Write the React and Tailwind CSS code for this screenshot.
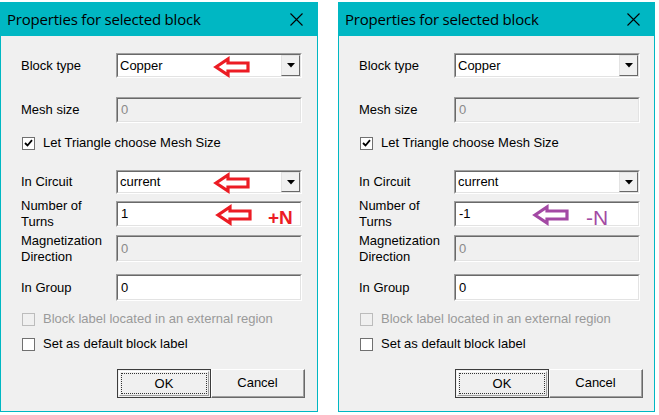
import React from "react";

const font = { fontFamily: '"Liberation Sans", Arial, sans-serif' };

function Sunken({ children, className = "", disabled }) {
  return (
    <div className={`border-t border-l border-t-[#a0a0a0] border-l-[#a0a0a0] border-b border-r border-b-white border-r-white ${className}`}>
      <div className={`h-full w-full border-t border-l border-t-[#696969] border-l-[#696969] border-b border-r border-b-[#e3e3e3] border-r-[#e3e3e3] ${disabled ? "bg-[#f0f0f0]" : "bg-white"} relative`}>
        {children}
      </div>
    </div>
  );
}

function Arrow({ color, className }) {
  return (
    <svg width="38" height="22" viewBox="0 0 38 22" className={className}>
      <polygon
        points="3,11 15,3 15,7 35,7 35,15 15,15 15,19"
        fill="none"
        stroke={color}
        strokeWidth="3.2"
        strokeLinejoin="miter"
      />
    </svg>
  );
}

function Combo({ value, extra }) {
  return (
    <Sunken className="w-[186px] h-full">
      <div className="h-full flex items-center pl-[2px] text-[13px] text-black">{value}</div>
      {extra}
      <div className="absolute right-0 top-0 bottom-0 w-[19px] bg-[#f0f0f0] border-t border-l border-t-[#e3e3e3] border-l-[#e3e3e3] border-b border-r border-b-[#696969] border-r-[#696969] flex items-center justify-center">
        <svg width="8" height="5" viewBox="0 0 8 5"><polygon points="0,0 8,0 4,4.5" fill="#000" /></svg>
      </div>
    </Sunken>
  );
}

function Field({ value, disabled, extra }) {
  return (
    <Sunken className="w-[186px] h-full" disabled={disabled}>
      <div className={`h-full flex items-center pl-[3px] text-[13px] ${disabled ? "text-[#8a8a8a]" : "text-black"}`}>{value}</div>
      {extra}
    </Sunken>
  );
}

function Check({ checked, disabled, label, className = "" }) {
  return (
    <div className={`flex items-center h-[16px] shrink-0 pl-[21px] ${className}`}>
      <div className={`w-[13px] h-[13px] border ${disabled ? "border-[#bcbcbc] bg-[#f0f0f0]" : "border-[#707070] bg-white"} flex items-center justify-center`}>
        {checked && (
          <svg width="9" height="8" viewBox="0 0 9 8"><polyline points="1,4 3.5,6.5 8,1.2" fill="none" stroke="#000" strokeWidth="1.8" /></svg>
        )}
      </div>
      <span className={`ml-[8px] text-[13px] whitespace-nowrap ${disabled ? "text-[#9a9a9a]" : "text-black"}`}>{label}</span>
    </div>
  );
}

function Row({ label, children, className = "" }) {
  return (
    <div className={`flex items-center shrink-0 ${className}`}>
      <div className="w-[115px] pl-[20px] text-[13px] leading-[16px] text-black whitespace-nowrap">{label}</div>
      <div className="h-full">{children}</div>
    </div>
  );
}

function Dialog({ turns, marks, w }) {
  return (
    <div className={`${w} h-[410px] border border-[#00b7c3] bg-[#f0f0f0] flex flex-col overflow-hidden`}>
      <div className="h-[33px] bg-[#00b7c3] flex items-center justify-between pl-[6px] pr-[14px] shrink-0">
        <span className="text-[15px] text-black" style={{ fontFamily: '"Open Sans", "Noto Sans", sans-serif', letterSpacing: "-0.2px" }}>Properties for selected block</span>
        <svg width="13" height="13" viewBox="0 0 13 13"><path d="M0.5 0.5 L12.5 12.5 M12.5 0.5 L0.5 12.5" stroke="#000" strokeWidth="1.1" /></svg>
      </div>
      <Row label="Block type" className="mt-[17px] h-[25px]">
        <Combo value="Copper" extra={marks && <Arrow color="#ec1c24" className="absolute left-[95px] top-[1px]" />} />
      </Row>
      <Row label="Mesh size" className="mt-[19px] h-[26px]">
        <Field value="0" disabled />
      </Row>
      <Check checked label="Let Triangle choose Mesh Size" className="mt-[12px]" />
      <Row label="In Circuit" className="mt-[19px] h-[24px]">
        <Combo value="current" extra={marks && <Arrow color="#ec1c24" className="absolute left-[95px] top-[0px]" />} />
      </Row>
      <Row label={<>Number of<br />Turns</>} className="mt-[7px] h-[26px]">
        <Field
          value={turns}
          extra={
            marks ? (
              <>
                <Arrow color="#ec1c24" className="absolute left-[97px] top-[1px]" />
                <span className="absolute left-[150px] top-[1px] text-[19px] font-bold text-[#ec1c24]" style={{ fontFamily: '"Liberation Sans", Arial, sans-serif' }}>+N</span>
              </>
            ) : (
              <>
                <Arrow color="#a349a4" className="absolute left-[76px] top-[1px]" />
                <span className="absolute left-[130px] top-[-1px] text-[21px] text-[#a349a4]" style={{ fontFamily: '"Liberation Sans", Arial, sans-serif' }}>-N</span>
              </>
            )
          }
        />
      </Row>
      <Row label={<>Magnetization<br />Direction</>} className="mt-[8px] h-[27px]">
        <Field value="0" disabled />
      </Row>
      <Row label="In Group" className="mt-[12px] h-[27px]">
        <Field value="0" />
      </Row>
      <Check disabled label="Block label located in an external region" className="mt-[10px]" />
      <Check label="Set as default block label" className="mt-[9px]" />
      <div className="flex mt-[17px] pl-[116px] shrink-0">
        <div className="w-[94px] h-[29px] border border-[#3c3c3c] bg-[#f0f0f0] p-[1px]">
          <div className="h-full w-full border-t border-l border-t-white border-l-white border-b border-r border-b-[#a0a0a0] border-r-[#a0a0a0] p-[1px]">
            <div className="h-full w-full border border-dotted border-[#333] flex items-center justify-center text-[13px] text-black">OK</div>
          </div>
        </div>
        <div className="w-[94px] h-[29px] border-t border-l border-t-white border-l-white border-b border-r border-b-[#696969] border-r-[#696969] bg-[#f0f0f0]">
          <div className="h-full w-full border-b border-r border-b-[#a0a0a0] border-r-[#a0a0a0] flex items-center justify-center text-[13px] text-black">Cancel</div>
        </div>
      </div>
    </div>
  );
}

export default function App() {
  return (
    <div className="w-[659px] h-[415px] bg-white pt-[2px] flex" style={font}>
      <Dialog turns="1" marks w="w-[318px]" />
      <div className="w-[20px]" />
      <Dialog turns="-1" w="w-[317px]" />
    </div>
  );
}
